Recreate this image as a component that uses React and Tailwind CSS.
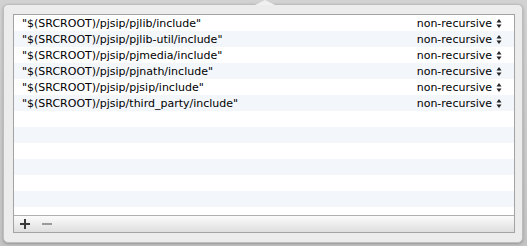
import React from "react";

const paths = [
  "pjlib/include",
  "pjlib-util/include",
  "pjmedia/include",
  "pjnath/include",
  "pjsip/include",
  "third_party/include",
];

function Stepper() {
  return (
    <svg width="6" height="11" viewBox="0 0 6 11" className="block">
      <path d="M3 1 L5.5 4.5 L0.5 4.5 Z" fill="#222" />
      <path d="M3 10 L5.5 6.5 L0.5 6.5 Z" fill="#222" />
    </svg>
  );
}

export default function App() {
  const rows = Array.from({ length: 13 }, (_, i) => i);
  return (
    <div
      className="w-[527px] h-[246px] bg-gradient-to-b from-[#d2d2d2] to-[#c4c4c4] pl-[3px] pt-[4px] overflow-hidden relative"
      style={{ fontFamily: '"DejaVu Sans", "Liberation Sans", sans-serif' }}
    >
      <div className="absolute left-[255px] top-0 w-0 h-0 border-l-[10px] border-r-[10px] border-b-[5px] border-l-transparent border-r-transparent border-b-[#f0f0f0] z-10" />
      <div className="w-[520px] h-[239px] bg-[#ececec] rounded-[5px] border border-[#bdbdbd] shadow-[0_1px_3px_rgba(0,0,0,0.25)] pl-[9px] pt-[9px]">
        <div className="w-[502px] h-[219px] border border-[#a3a3a3] bg-white flex flex-col">
          <div className="h-[200px] overflow-hidden flex flex-col">
            {rows.map((i) => (
              <div
                key={i}
                className={`h-[16px] shrink-0 flex items-center text-[11px] text-black leading-none ${
                  i % 2 === 1 ? "bg-[#f3f6fa]" : "bg-white"
                }`}
              >
                {i < paths.length && (
                  <>
                    <span className="pl-[8px] flex-1 whitespace-nowrap">
                      "$(SRCROOT)/pjsip/{paths[i]}"
                    </span>
                    <span className="whitespace-nowrap">non-recursive</span>
                    <span className="pl-[4px] pr-[12px]">
                      <Stepper />
                    </span>
                  </>
                )}
              </div>
            ))}
          </div>
          <div className="flex-1 border-t border-[#b0b0b0] bg-gradient-to-b from-[#fbfbfb] via-[#ededed] to-[#dedede] flex items-center pl-[6px] gap-[12px]">
            <svg width="10" height="10" viewBox="0 0 10 10">
              <rect x="4" y="0" width="2" height="10" fill="#3a3a3a" />
              <rect x="0" y="4" width="10" height="2" fill="#3a3a3a" />
            </svg>
            <svg width="10" height="10" viewBox="0 0 10 10">
              <rect x="0" y="4" width="10" height="2" fill="#9a9a9a" />
            </svg>
          </div>
        </div>
      </div>
    </div>
  );
}
